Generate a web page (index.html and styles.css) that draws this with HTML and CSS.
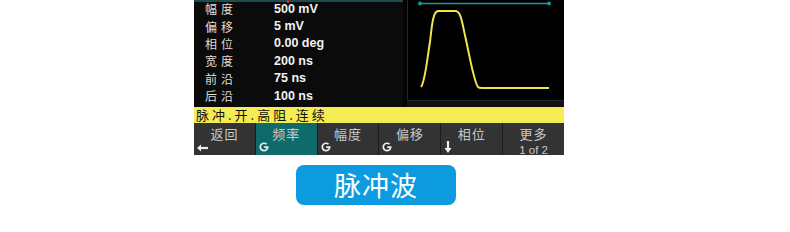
FILE: index.html
```html
<!DOCTYPE html>
<html>
<head>
<meta charset="utf-8">
<link rel="stylesheet" href="styles.css">
</head>
<body>
<div class="page">
  <div class="screen">
    <div class="display">
      <div class="params">
        <div class="topline"><span class="cursor"></span></div>
        <div class="row"><span class="lbl">幅度</span><span class="val">500 mV</span></div>
        <div class="row"><span class="lbl">偏移</span><span class="val">5 mV</span></div>
        <div class="row"><span class="lbl">相位</span><span class="val">0.00 deg</span></div>
        <div class="row"><span class="lbl">宽度</span><span class="val">200 ns</span></div>
        <div class="row"><span class="lbl">前沿</span><span class="val">75 ns</span></div>
        <div class="row"><span class="lbl">后沿</span><span class="val">100 ns</span></div>
      </div>
      <div class="gap"></div>
      <div class="wave">
        <svg width="156" height="101" viewBox="0 0 156 101">
          <line x1="12" y1="3.5" x2="141" y2="3.5" stroke="#179a9a" stroke-width="1.5"/>
          <circle cx="12" cy="3.5" r="2" fill="#179a9a"/>
          <circle cx="141" cy="3.5" r="2" fill="#179a9a"/>
          <path d="M13 87 C17 82 19 60 22 42 C24 24 25 12 30 11 L48 11 C53 12 54 22 58 40 C62 58 66 82 70 87 C71 88 72 88 74 88 L141 88" fill="none" stroke="#f2e447" stroke-width="2"/>
        </svg>
      </div>
    </div>
    <div class="status">脉冲.开.高阻.连续</div>
    <div class="buttons">
      <div class="btn"><span class="bl">返回</span>
        <svg class="ic" width="12" height="8" viewBox="0 0 12 8"><path d="M11 4 H3" stroke="#eee" stroke-width="2.2"/><path d="M0 4 L4 0.5 L4 7.5 Z" fill="#eee"/></svg>
      </div>
      <div class="btn active"><span class="bl">频率</span>
        <svg class="ic" width="10" height="10" viewBox="0 0 10 10"><path d="M7.5 2.2 A3.7 3.7 0 1 0 8.7 5.2 H5.2" fill="none" stroke="#eee" stroke-width="1.7"/></svg>
      </div>
      <div class="btn"><span class="bl">幅度</span>
        <svg class="ic" width="10" height="10" viewBox="0 0 10 10"><path d="M7.5 2.2 A3.7 3.7 0 1 0 8.7 5.2 H5.2" fill="none" stroke="#eee" stroke-width="1.7"/></svg>
      </div>
      <div class="btn"><span class="bl">偏移</span>
        <svg class="ic" width="10" height="10" viewBox="0 0 10 10"><path d="M7.5 2.2 A3.7 3.7 0 1 0 8.7 5.2 H5.2" fill="none" stroke="#eee" stroke-width="1.7"/></svg>
      </div>
      <div class="btn"><span class="bl">相位</span>
        <svg class="ic down" width="8" height="12" viewBox="0 0 8 12"><path d="M4 0 V8" stroke="#eee" stroke-width="2.2"/><path d="M0.5 7 L7.5 7 L4 12 Z" fill="#eee"/></svg>
      </div>
      <div class="btn more"><span class="bl">更多</span><span class="sub">1 of 2</span></div>
    </div>
  </div>
  <div class="pill">脉冲波</div>
</div>
</body>
</html>
```
FILE: styles.css
```css
html, body {
  margin: 0;
  padding: 0;
  background: #ffffff;
}
body {
  width: 790px;
  height: 232px;
  overflow: hidden;
  font-family: "Liberation Sans", "Noto Sans CJK SC", sans-serif;
}
.page {
  padding-left: 194px;
}
.screen {
  width: 370px;
  background: #0a0a0a;
}
.display {
  display: flex;
  height: 107px;
  background: #121212;
}
.params {
  width: 209px;
  background: #0b0b0b;
  position: relative;
}
.topline {
  position: absolute;
  left: 0;
  right: 0;
  top: 0;
  height: 2px;
  background: #1d4c4c;
}
.cursor {
  position: absolute;
  left: 93px;
  top: 0;
  width: 2px;
  height: 3px;
  background: #c0302a;
}
.row {
  display: flex;
  align-items: center;
  height: 17.4px;
}
.lbl {
  width: 80px;
  padding-left: 11px;
  box-sizing: border-box;
  font-family: "Noto Sans CJK SC", sans-serif;
  font-size: 12px;
  line-height: 17px;
  color: #dcdcdc;
  letter-spacing: 4px;
}
.val {
  font-size: 12.5px;
  line-height: 16px;
  font-weight: bold;
  color: #f2f2f2;
}
.gap {
  width: 4px;
  background: #050505;
}
.wave {
  width: 157px;
  height: 101px;
  background: #000;
  border-left: 1px solid #242424;
  border-bottom: 1px solid #242424;
  box-sizing: border-box;
}
.wave svg {
  display: block;
}
.status {
  height: 16px;
  background: #f4ec52;
  color: #111;
  font-family: "Noto Sans CJK SC", sans-serif;
  font-size: 13px;
  line-height: 16px;
  padding-left: 2px;
  white-space: nowrap;
  letter-spacing: 3px;
}
.buttons {
  display: flex;
  height: 32px;
  background: #1a1a1a;
}
.btn {
  flex: 1;
  position: relative;
  background: #333333;
  border-right: 1px solid #1c1c1c;
  display: flex;
  flex-direction: column;
  align-items: center;
}
.btn:last-child {
  border-right: none;
}
.btn.active {
  background: #0f6b6b;
}
.bl {
  font-family: "Noto Sans CJK SC", sans-serif;
  font-size: 13px;
  line-height: 14px;
  color: #c8c8c8;
  margin-top: 4px;
  letter-spacing: 1px;
}
.sub {
  font-size: 11.5px;
  color: #c8c8c8;
  line-height: 14px;
  margin-top: 1.5px;
}
.ic {
  position: absolute;
  left: 3px;
  bottom: 3px;
}
.ic.down {
  bottom: 2px;
}
.pill {
  width: 160px;
  height: 40px;
  margin-top: 10px;
  margin-left: 102px;
  border-radius: 8px;
  background: #0d9be0;
  color: #ffffff;
  font-family: "Noto Sans CJK SC", sans-serif;
  font-size: 27px;
  line-height: 40px;
  text-align: center;
  letter-spacing: 1px;
}
```
